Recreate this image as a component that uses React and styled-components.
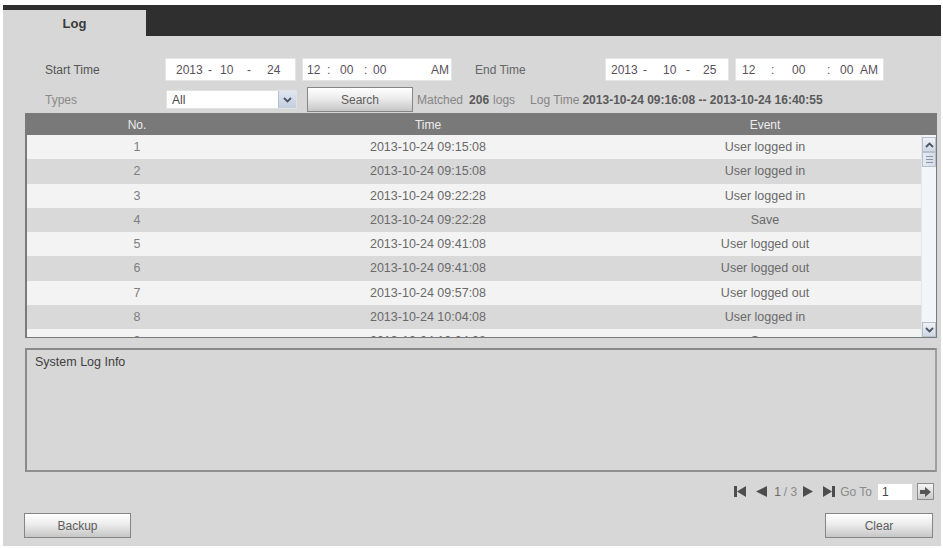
import React from 'react';
import styled, { createGlobalStyle } from 'styled-components';

const GlobalStyle = createGlobalStyle`
  html, body { margin: 0; padding: 0; background: #fff; }
  body { font-family: "Liberation Sans", Arial, sans-serif; }
  * { box-sizing: border-box; }
`;

const Page = styled.div`
  width: 943px;
  height: 548px;
  padding: 5px 2px 2px 3px;
  background: #fff;
`;

const Panel = styled.div`
  width: 938px;
  height: 541px;
  background: #d7d7d7;
  display: flex;
  flex-direction: column;
`;

const TabBar = styled.div`
  height: 31px;
  background: #2f2f2f;
  display: flex;
  align-items: flex-end;
`;

const Tab = styled.div`
  width: 143px;
  height: 26px;
  background: #d7d7d7;
  display: flex;
  align-items: center;
  justify-content: center;
  font-weight: bold;
  font-size: 13px;
  color: #3a3a3a;
`;

const Content = styled.div`
  padding: 22px 4px 0 22px;
  display: flex;
  flex-direction: column;
`;

const FilterRow = styled.div`
  display: flex;
  align-items: center;
  height: ${p => p.$h}px;
  margin-bottom: ${p => p.$mb || 0}px;
`;

const Label = styled.div`
  width: ${p => p.$w}px;
  margin-left: ${p => p.$ml}px;
  font-size: 12px;
  color: ${p => p.$c || '#555'};
`;

const FieldBox = styled.div`
  width: ${p => p.$w}px;
  height: 23px;
  margin-left: ${p => p.$ml || 0}px;
  padding-left: ${p => p.$pl || 0}px;
  padding-right: ${p => p.$pr || 2}px;
  background: #fff;
  border: 1px solid #e4e4e4;
  display: flex;
  align-items: center;
  font-size: 12px;
  color: #5a5160;
`;

const Seg = styled.span`
  width: ${p => (p.$w ? `${p.$w}px` : 'auto')};
  flex: none;
  margin-left: ${p => (p.$push ? 'auto' : '0')};
`;

const Select = styled.div`
  width: 131px;
  height: 19px;
  margin-left: 1px;
  background: #fff;
  border: 1px solid #e2e2e2;
  display: flex;
  align-items: stretch;
  font-size: 12px;
  color: #4a4a4a;
`;

const SelectText = styled.div`
  flex: 1;
  padding-left: 5px;
  display: flex;
  align-items: center;
`;

const SelectArrow = styled.div`
  width: 18px;
  background: linear-gradient(#dfe6ef, #c3cede);
  border-left: 1px solid #b5c0cf;
  display: flex;
  align-items: center;
  justify-content: center;
`;

const Button = styled.button`
  width: ${p => p.$w}px;
  height: 25px;
  margin-left: ${p => p.$ml || 0}px;
  border: 1px solid #858585;
  background: linear-gradient(#ffffff 0%, #ececec 45%, #c6c6c6 100%);
  font-family: "Liberation Sans", Arial, sans-serif;
  font-size: 12px;
  color: #5e5e5e;
  padding: 0;
`;

const Info = styled.div`
  margin-left: 4px;
  font-size: 12px;
  color: #858585;
  white-space: nowrap;
  display: flex;
  align-items: center;
`;

const InfoPart = styled.span`
  margin-left: ${p => p.$ml || 0}px;
  font-weight: ${p => (p.$bold ? 'bold' : 'normal')};
  color: ${p => (p.$bold ? '#5a5a5a' : '#858585')};
`;

const Table = styled.div`
  margin-top: 1px;
  width: 912px;
  height: 225px;
  border: 1px solid #7a7a7a;
  border-left: 2px solid #7a7a7a;
  display: flex;
  flex-direction: column;
`;

const Cols = `
  display: grid;
  grid-template-columns: 220px 362px 1fr;
  align-items: center;
  text-align: center;
`;

const Header = styled.div`
  ${Cols}
  grid-template-columns: 220px 362px 1fr 15px;
  height: 21px;
  flex: none;
  background: #797979;
  color: #ececec;
  font-size: 12px;
`;

const Body = styled.div`
  flex: 1;
  display: flex;
  overflow: hidden;
`;

const Rows = styled.div`
  flex: 1;
  overflow: hidden;
  background: #f3f3f3;
`;

const Row = styled.div`
  ${Cols}
  height: 24.25px;
  background: ${p => (p.$alt ? '#d9d9d9' : '#f3f3f3')};
  color: #6a6a6a;
  font-size: 12.5px;
`;

const NoCell = styled.span`
  color: #7e7e7e;
`;

const Scrollbar = styled.div`
  width: 15px;
  display: flex;
  flex-direction: column;
  background: #f2f5f9;
  border-left: 1px solid #e3e7ec;
`;

const ScrollBtn = styled.div`
  height: 15px;
  flex: none;
  margin-top: ${p => p.$mt || 0}px;
  background: linear-gradient(#eef2f7, #cfd8e4);
  border: 1px solid #b7c1ce;
  display: flex;
  align-items: center;
  justify-content: center;
`;

const Thumb = styled.div`
  height: 15px;
  flex: none;
  background: linear-gradient(90deg, #e6ebf2, #d4dce7);
  border: 1px solid #b7c1ce;
  display: flex;
  flex-direction: column;
  align-items: center;
  justify-content: center;
  gap: 2px;
`;

const Grip = styled.div`
  width: 7px;
  height: 1px;
  background: #8a96a6;
`;

const Track = styled.div`
  flex: 1;
`;

const InfoBox = styled.div`
  margin-top: 10px;
  width: 912px;
  height: 124px;
  border: 2px solid #8a8a8a;
  border-right-color: #a0a0a0;
  border-bottom-color: #8f8f8f;
  padding: 5px 8px;
  font-size: 12.5px;
  line-height: 14px;
  color: #3f3f3f;
`;

const Pager = styled.div`
  margin-top: 11px;
  height: 17px;
  display: flex;
  align-items: center;
  justify-content: flex-end;
  padding-right: 3px;
  font-size: 12px;
  color: #8a8a8a;
`;

const PagerItem = styled.span`
  display: flex;
  align-items: center;
  margin-left: ${p => p.$ml || 0}px;
  color: ${p => p.$c || '#8a8a8a'};
`;

const PageInput = styled.div`
  width: 34px;
  height: 16px;
  margin-left: 6px;
  background: #fff;
  padding-left: 4px;
  display: flex;
  align-items: center;
  font-size: 12px;
  color: #444;
`;

const GoButton = styled.div`
  width: 17px;
  height: 17px;
  margin-left: 5px;
  border: 1px solid #8d8d8d;
  background: linear-gradient(#f6f6f6, #c9c9c9);
  display: flex;
  align-items: center;
  justify-content: center;
`;

const Footer = styled.div`
  margin-top: 13px;
  margin-left: -1px;
  padding-right: 4px;
  display: flex;
  justify-content: space-between;
`;

const Chevron = ({ up }) => (
  <svg width="9" height="6" viewBox="0 0 9 6">
    <path
      d={up ? 'M1 5 L4.5 1.5 L8 5' : 'M1 1 L4.5 4.5 L8 1'}
      fill="none"
      stroke="#4a5566"
      strokeWidth="1.8"
    />
  </svg>
);

const FirstIcon = () => (
  <svg width="12" height="11" viewBox="0 0 12 11">
    <rect x="0" y="0" width="3" height="11" fill="#4d4d4d" />
    <polygon points="12,0 3,5.5 12,11" fill="#4d4d4d" />
  </svg>
);
const PrevIcon = () => (
  <svg width="11" height="11" viewBox="0 0 11 11">
    <polygon points="11,0 0,5.5 11,11" fill="#4d4d4d" />
  </svg>
);
const NextIcon = () => (
  <svg width="10" height="11" viewBox="0 0 10 11">
    <polygon points="0,0 10,5.5 0,11" fill="#4d4d4d" />
  </svg>
);
const LastIcon = () => (
  <svg width="12" height="11" viewBox="0 0 12 11">
    <polygon points="0,0 9,5.5 0,11" fill="#4d4d4d" />
    <rect x="9" y="0" width="3" height="11" fill="#4d4d4d" />
  </svg>
);
const GoIcon = () => (
  <svg width="11" height="10" viewBox="0 0 11 10">
    <polygon points="0,3 5,3 5,0 11,5 5,10 5,7 0,7" fill="#555" />
  </svg>
);

const DateField = ({ w, ml, pl, widths, parts }) => (
  <FieldBox $w={w} $ml={ml} $pl={pl}>
    {parts.map((t, i) => (
      <Seg key={i} $w={widths[i]}>{t}</Seg>
    ))}
  </FieldBox>
);

const TimeField = ({ w, ml, pl, pr, widths }) => {
  const parts = ['12', ':', '00', ':', '00'];
  return (
    <FieldBox $w={w} $ml={ml} $pl={pl} $pr={pr}>
      {parts.map((t, i) => (
        <Seg key={i} $w={widths[i]}>{t}</Seg>
      ))}
      <Seg $push>AM</Seg>
    </FieldBox>
  );
};

const logs = [
  ['1', '2013-10-24 09:15:08', 'User logged in'],
  ['2', '2013-10-24 09:15:08', 'User logged in'],
  ['3', '2013-10-24 09:22:28', 'User logged in'],
  ['4', '2013-10-24 09:22:28', 'Save'],
  ['5', '2013-10-24 09:41:08', 'User logged out'],
  ['6', '2013-10-24 09:41:08', 'User logged out'],
  ['7', '2013-10-24 09:57:08', 'User logged out'],
  ['8', '2013-10-24 10:04:08', 'User logged in'],
  ['9', '2013-10-24 10:04:08', 'Save'],
];

export default function App() {
  return (
    <>
      <GlobalStyle />
      <Page>
        <Panel>
          <TabBar>
            <Tab>Log</Tab>
          </TabBar>
          <Content>
            <FilterRow $h={23} $mb={6}>
              <Label $w={120} $ml={20}>Start Time</Label>
              <DateField
                w={131}
                pl={10}
                widths={[32, 12, 27, 20, 20]}
                parts={['2013', '-', '10', '-', '24']}
              />
              <TimeField w={150} ml={6} pl={4} pr={2} widths={[20, 13, 24, 9, 20]} />
              <Label $w={130} $ml={23} $c="#666">End Time</Label>
              <DateField
                w={124}
                pl={5}
                widths={[32, 20, 23, 17, 20]}
                parts={['2013', '-', '10', '-', '25']}
              />
              <TimeField w={149} ml={6} pl={6} pr={5} widths={[29, 21, 35, 13, 20]} />
            </FilterRow>
            <FilterRow $h={25}>
              <Label $w={120} $ml={20} $c="#8a8a8a">Types</Label>
              <Select>
                <SelectText>All</SelectText>
                <SelectArrow>
                  <Chevron />
                </SelectArrow>
              </Select>
              <Button $w={106} $ml={10}>Search</Button>
              <Info>
                <InfoPart>Matched</InfoPart>
                <InfoPart $ml={6} $bold>206</InfoPart>
                <InfoPart $ml={4}>logs</InfoPart>
                <InfoPart $ml={15}>Log Time</InfoPart>
                <InfoPart $ml={3} $bold>2013-10-24 09:16:08 -- 2013-10-24 16:40:55</InfoPart>
              </Info>
            </FilterRow>
            <Table>
              <Header>
                <span>No.</span>
                <span>Time</span>
                <span>Event</span>
                <span />
              </Header>
              <Body>
                <Rows>
                  {logs.map((r, i) => (
                    <Row key={r[0]} $alt={i % 2 === 1}>
                      <NoCell>{r[0]}</NoCell>
                      <span>{r[1]}</span>
                      <span>{r[2]}</span>
                    </Row>
                  ))}
                </Rows>
                <Scrollbar>
                  <ScrollBtn $mt={2}>
                    <Chevron up />
                  </ScrollBtn>
                  <Thumb>
                    <Grip />
                    <Grip />
                    <Grip />
                  </Thumb>
                  <Track />
                  <ScrollBtn>
                    <Chevron />
                  </ScrollBtn>
                </Scrollbar>
              </Body>
            </Table>
            <InfoBox>System Log Info</InfoBox>
            <Pager>
              <PagerItem><FirstIcon /></PagerItem>
              <PagerItem $ml={10}><PrevIcon /></PagerItem>
              <PagerItem $ml={7} $c="#6a6a6a">1</PagerItem>
              <PagerItem $ml={3}>/ 3</PagerItem>
              <PagerItem $ml={6}><NextIcon /></PagerItem>
              <PagerItem $ml={10}><LastIcon /></PagerItem>
              <PagerItem $ml={5}>Go To</PagerItem>
              <PageInput>1</PageInput>
              <GoButton><GoIcon /></GoButton>
            </Pager>
            <Footer>
              <Button $w={107}>Backup</Button>
              <Button $w={108}>Clear</Button>
            </Footer>
          </Content>
        </Panel>
      </Page>
    </>
  );
}
